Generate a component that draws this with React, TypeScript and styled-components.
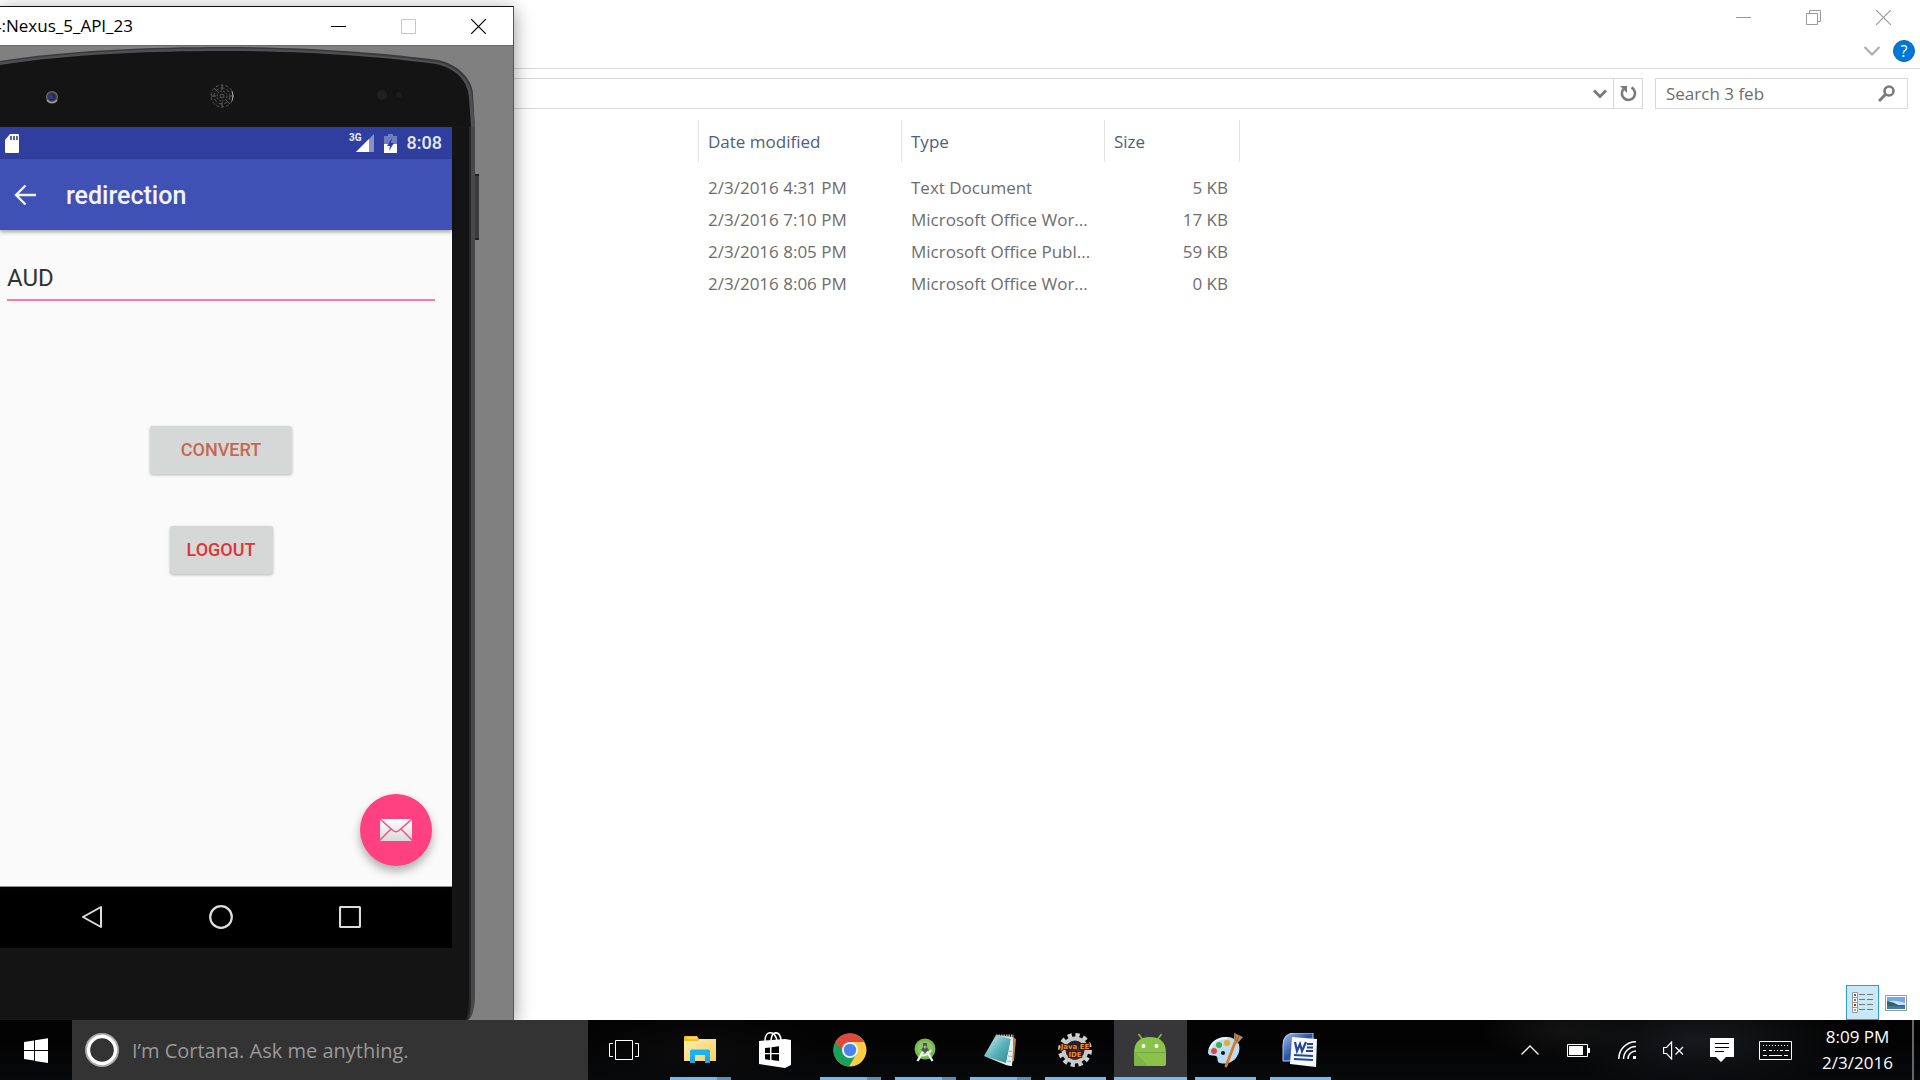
import React from 'react';
import styled, { createGlobalStyle } from 'styled-components';

const GlobalStyle = createGlobalStyle`
  *, *::before, *::after { box-sizing: border-box; }
  body { margin: 0; background: #fff; font-family: "Open Sans", "Noto Sans", sans-serif; font-size: 17px; line-height: 24px; }
  button { font: inherit; color: inherit; border: 0; padding: 0; background: none; display: flex; align-items: center; justify-content: center; flex-shrink: 0; }
  input { font: inherit; color: inherit; border: 0; padding: 0; background: none; outline: none; min-width: 0; }
  svg { display: block; flex-shrink: 0; }
`;

const Page = styled.div`
  display: flex;
  flex-direction: column;
  height: 100vh;
  overflow: hidden;
`;

const Desktop = styled.main`
  position: relative;
  flex: 1;
  min-height: 0;
  display: flex;
  overflow: hidden;
`;

/* ---------- File explorer ---------- */

const Explorer = styled.section`
  flex: 1;
  display: flex;
  flex-direction: column;
  background: #fff;
`;

const CaptionBar = styled.header`
  display: flex;
  justify-content: flex-end;
  height: 34px;
  padding-right: 2px;
`;

const CaptionButton = styled.button<{ $tone?: string; $h?: number }>`
  width: 70px;
  height: ${(p) => p.$h ?? 34}px;
  color: ${(p) => p.$tone ?? '#999'};
`;

const RibbonBar = styled.div`
  display: flex;
  align-items: center;
  justify-content: flex-end;
  gap: 12px;
  height: 35px;
  padding: 0 5px 0 0;
  border-bottom: 1px solid #dadada;
`;

const IconButton = styled.button<{ $w: number }>`
  width: ${(p) => p.$w}px;
  align-self: stretch;
  color: #7a7a7a;
`;

const AddressRow = styled.div`
  display: flex;
  gap: 12px;
  padding: 9px 12px 11px 0;
`;

const AddressBox = styled.div`
  flex: 1;
  display: flex;
  height: 31px;
  border: 1px solid #d9d9d9;
`;

const AddressInput = styled.input`
  flex: 1;
`;

const RefreshCell = styled.div`
  display: flex;
  border-left: 1px solid #d9d9d9;
`;

const SearchBox = styled.form`
  display: flex;
  align-items: center;
  width: 253px;
  height: 31px;
  padding: 0 6px 0 10px;
  border: 1px solid #d9d9d9;
`;

const SearchInput = styled.input`
  flex: 1;
  color: #6d6d6d;
  &::placeholder { color: #6d6d6d; opacity: 1; }
`;

const FileArea = styled.div`
  flex: 1;
  padding-left: 698px;
`;

const FileTable = styled.table`
  table-layout: fixed;
  width: 542px;
  border-collapse: separate;
  border-spacing: 0;
`;

const HeadCell = styled.th`
  height: 42px;
  padding: 2px 0 0 9px;
  border-left: 1px solid #e3e3e3;
  color: #4c607a;
  font-weight: 400;
  text-align: left;
  &:last-child { border-right: 1px solid #e3e3e3; }
`;

const SpacerCell = styled.td`
  height: 10px;
  padding: 0;
`;

const Cell = styled.td<{ $right?: boolean }>`
  height: 32px;
  padding: 0 ${(p) => (p.$right ? 12 : 0)}px 0 10px;
  color: #6d6d6d;
  text-align: ${(p) => (p.$right ? 'right' : 'left')};
  white-space: nowrap;
`;

const ViewBar = styled.footer`
  display: flex;
  align-items: center;
  justify-content: flex-end;
  gap: 6px;
  padding-right: 13px;
`;

const ViewButton = styled.button<{ $on?: boolean }>`
  width: ${(p) => (p.$on ? 33 : 22)}px;
  height: 35px;
  border: ${(p) => (p.$on ? '1px solid #26a0da' : '0')};
  background: ${(p) => (p.$on ? '#cbe8f6' : 'none')};
`;

/* ---------- Emulator window ---------- */

const EmulatorWindow = styled.section`
  position: absolute;
  left: 0;
  top: 6px;
  bottom: 0;
  width: 514px;
  display: flex;
  flex-direction: column;
  background: #808080;
  border-top: 1px solid #111;
  border-right: 1px solid #555;
  box-shadow: 0 4px 18px rgba(0, 0, 0, 0.42);
`;

const EmulatorCaption = styled.header`
  display: flex;
  justify-content: space-between;
  height: 39px;
  background: #fff;
  border-bottom: 1px solid #6a6a6a;
  color: #000;
`;

const EmulatorTitle = styled.h1`
  display: flex;
  align-items: center;
  justify-content: flex-end;
  width: 133px;
  margin: 0;
  font-size: 17px;
  font-weight: 400;
  overflow: hidden;
  white-space: nowrap;
`;

const CaptionGroup = styled.div`
  display: flex;
`;

const Phone = styled.div`
  position: relative;
  flex: 1;
  display: flex;
  flex-direction: column;
`;

const PhoneBody = styled.div`
  flex: 1;
  width: 475px;
  background: #141414;
  border-right: 4px solid #48484b;
  border-bottom-right-radius: 8px 24px;
  box-shadow: inset -2px 0 1px #29292b;
`;

const SideKey = styled.i`
  position: absolute;
  left: 475px;
  top: 128px;
  width: 4px;
  height: 66px;
  background: #3b3b3c;
  border-top: 2px solid #222;
  border-bottom: 2px solid #222;
`;

const Screen = styled.div`
  width: 452px;
  font-family: Roboto, sans-serif;
`;

const StatusBar = styled.div`
  display: flex;
  align-items: center;
  height: 32px;
  padding: 0 10px 0 5px;
  background: #303f9f;
  color: #e8eaf6;
  font-size: 18px;
  font-weight: 500;
`;

const StatusGroup = styled.div`
  display: flex;
  align-items: center;
  gap: 10px;
  margin-left: auto;
`;

const Network = styled.div`
  display: flex;
  align-items: flex-start;
  font-size: 10px;
  line-height: 8px;
  font-weight: 700;
`;

const NetworkLabel = styled.span`
  margin-right: -6px;
`;

const AppBar = styled.div`
  position: relative;
  display: flex;
  align-items: center;
  gap: 30px;
  height: 71px;
  padding-left: 14px;
  background: #3f51b5;
  box-shadow: 0 2px 4px rgba(0, 0, 0, 0.35);
  color: #f3f4fb;
`;

const AppTitle = styled.h2`
  margin: 0;
  padding-top: 2px;
  font-size: 25px;
  line-height: 32px;
  font-weight: 500;
`;

const AppContent = styled.div`
  display: flex;
  flex-direction: column;
  align-items: center;
  height: 657px;
  padding: 28px 17px 20px 7px;
  background: #fafafa;
  border-bottom: 1px solid #8b9490;
`;

const CurrencyInput = styled.input`
  align-self: stretch;
  height: 43px;
  padding-bottom: 2px;
  border-bottom: 2px solid #ff7ba6;
  color: #333;
  font-size: 24px;
`;

const AppButton = styled.button<{ $w: number; $top: number; $color: string }>`
  width: ${(p) => p.$w}px;
  height: 48px;
  margin-top: ${(p) => p.$top}px;
  border-radius: 3px;
  background: #d6d7d7;
  box-shadow: 0 1px 3px rgba(0, 0, 0, 0.28);
  color: ${(p) => p.$color};
  font-size: 18px;
  font-weight: 500;
`;

const Fab = styled.button`
  align-self: flex-end;
  width: 72px;
  height: 72px;
  margin-top: auto;
  margin-right: 3px;
  border-radius: 50%;
  background: #ff4081;
  box-shadow: 0 5px 10px rgba(0, 0, 0, 0.32);
`;

const NavBar = styled.nav`
  display: flex;
  align-items: center;
  justify-content: center;
  gap: 104px;
  height: 61px;
  padding: 0 10px 2px 0;
  background: #000;
`;

const NavButton = styled.button`
  width: 25px;
  height: 40px;
`;

/* ---------- Taskbar ---------- */

const Taskbar = styled.footer`
  display: flex;
  height: 60px;
  background:
    radial-gradient(ellipse 150px 50px at 1700px 20px, #17191c, transparent),
    radial-gradient(ellipse 80px 30px at 1560px 10px, #131313, transparent),
    radial-gradient(ellipse 120px 40px at 700px 30px, #0b0b0c, transparent),
    linear-gradient(#030303 0 20px, #08090b);
  color: #fff;
`;

const StartButton = styled.button`
  width: 72px;
`;

const CortanaBox = styled.label`
  display: flex;
  align-items: center;
  gap: 13px;
  width: 516px;
  padding-left: 13px;
  background: #333;
`;

const CortanaInput = styled.input`
  flex: 1;
  padding-top: 2px;
  color: #999;
  font-size: 20px;
  line-height: 28px;
  &::placeholder { color: #999; opacity: 1; }
`;

const Apps = styled.div`
  display: flex;
  gap: 2px;
`;

const AppTile = styled.button<{ $active?: boolean; $plain?: boolean }>`
  width: ${(p) => (p.$plain ? 74 : 73)}px;
  padding-right: 2px;
  background: ${(p) => (p.$active ? '#37373a' : 'none')};
  position: relative;
`;

const RunMark = styled.i<{ $wide?: boolean; $multi?: boolean }>`
  position: absolute;
  left: ${(p) => (p.$wide ? 0 : 6)}px;
  right: ${(p) => (p.$wide ? 0 : 6)}px;
  bottom: 0;
  height: 3px;
  background: #76b9ed;
  border-right: ${(p) => (p.$multi ? '14px solid #5b8fb8' : '0')};
`;

const Tray = styled.div`
  display: flex;
  align-items: center;
  margin-left: auto;
`;

const TrayButton = styled.button<{ $w: number }>`
  width: ${(p) => p.$w}px;
  height: 60px;
`;

const Clock = styled.time`
  width: 109px;
  text-align: center;
  line-height: 26px;
`;

const ShowDesktop = styled.button`
  width: 8px;
  height: 60px;
  border-left: 2px solid #666;
`;

/* ---------- Drawings ---------- */

const Minimize = () => (
  <svg width="15" height="15"><path d="M0 7.5h15" stroke="currentColor" /></svg>
);
const Close = () => (
  <svg width="15" height="15"><path d="M0 0l15 15M15 0L0 15" stroke="currentColor" fill="none" strokeWidth="1.2" /></svg>
);
const Restore = () => (
  <svg width="15" height="15"><path d="M.5 3.500h11v11H.5zM3.500 3.500v-3h11v11h-3" stroke="currentColor" fill="none" /></svg>
);
const Maximize = () => (
  <svg width="15" height="15"><path d="M.5.5h14v14H.5z" stroke="currentColor" fill="none" /></svg>
);

const PhoneTop = () => (
  <svg width="512" height="81" viewBox="0 0 512 81" aria-hidden="true">
    <defs>
      <radialGradient id="lens"><stop offset="0" stopColor="#3a3ab0" /><stop offset=".4" stopColor="#22224a" /><stop offset=".7" stopColor="#444" /><stop offset="1" stopColor="#777" /></radialGradient>
    </defs>
    <path d="M0 15C70 4 150 1 225 1C310 1 385 7 438 14C460 19 472 34 473 48L475 81H0z" fill="#3a3a3c" />
    <path d="M0 16.500C70 5.500 150 2.500 225 2.500C310 2.500 385 9 437 16C459 21 471 36 472 50L475 81H0z" fill="#505054" />
    <path d="M0 19C70 8 150 5 225 5C310 5 385 11 436 18C458 23 468 36 469 52L471 81H0z" fill="#141414" />
    <circle cx="52" cy="51" r="6" fill="url(#lens)" />
    <path d="M47 54a6 6 0 0 0 10 0" stroke="#999" strokeWidth="1.500" fill="none" />
    <circle cx="51" cy="51" r="2" fill="#3434a8" />
    <g stroke="#5e5e5e" strokeWidth="1" fill="none">
      <circle cx="222" cy="50" r="11" strokeDasharray="3 2" />
      <circle cx="222" cy="50" r="8" strokeDasharray="4 2" />
      <circle cx="222" cy="50" r="5" strokeDasharray="2 1" />
      <circle cx="222" cy="50" r="2" />
      <path d="M222 39v5M222 56v5M211 50h5M230 50h4M214 42l4 4M226 54l4 4" />
      <path d="M232 45q2 5 0 10" stroke="#aaa" />
    </g>
    <circle cx="382" cy="49" r="5" fill="#202020" />
    <circle cx="399" cy="49" r="3" fill="#241a1c" />
  </svg>
);

const SdCard = () => (
  <svg width="15" height="19" viewBox="0 0 15 19"><path d="M5 0h8q1 0 1 1v17q0 1-1 1H1q-1 0-1-1V6z" fill="#fff" /><path d="M6 2v4M9 2v4M12 2v4" stroke="#303f9f" strokeWidth="1.600" /></svg>
);
const Signal = () => (
  <svg width="18" height="18" viewBox="0 0 18 18"><path d="M18 0v18H0z" fill="#8790c9" /><path d="M13 5v13H0z" fill="#fff" /></svg>
);
const PhoneBattery = () => (
  <svg width="13" height="19" viewBox="0 0 13 19"><path d="M4 0h5v2h4v17H0V2h4z" fill="#6f7abf" /><path d="M0 10h13v9H0z" fill="#fff" /><path d="M8 4l-5 8h3l-1 5 5-8H7z" fill="#303f9f" /></svg>
);
const BackArrow = () => (
  <svg width="22" height="22" viewBox="0 0 22 22"><path d="M22 11H2M11.500 1.500L2 11l9.500 9.500" fill="none" stroke="#eef0fa" strokeWidth="2.400" /></svg>
);
const Mail = () => (
  <svg width="32" height="22" viewBox="0 0 32 22">
    <defs><linearGradient id="mail" x2="0" y2="1"><stop stopColor="#fff" /><stop offset="1" stopColor="#d9d9d9" /></linearGradient></defs>
    <rect width="32" height="22" rx="1.500" fill="url(#mail)" />
    <path d="M0 0l13 11.500q3 2.500 6 0L32 0M0 21l11-11M32 21L21 10" fill="none" stroke="#f0508a" strokeWidth="1.500" />
  </svg>
);

const WindowsLogo = () => (
  <svg width="24" height="25" viewBox="0 0 24 25" fill="#fff"><path d="M0 4l10-1.500V12H0zM11 2.300L24 .3V12H11zM0 13h10v9.500L0 21zM11 13h13v12l-13-2z" /></svg>
);
const CortanaRing = () => (
  <svg width="34" height="34" viewBox="0 0 34 34" fill="none"><circle cx="17" cy="17" r="16" stroke="#aaa" strokeWidth="2" /><circle cx="17" cy="17" r="13.500" stroke="#fff" strokeWidth="3.400" /></svg>
);
const TaskView = () => (
  <svg width="30" height="20" viewBox="0 0 30 20" fill="none" stroke="#fff"><path d="M6.500.5h17v19h-17zM4 3.500H.5v13H4M26 3.500h3.500v13H26" /></svg>
);
const Folder = () => (
  <svg width="32" height="28" viewBox="0 0 32 28">
    <defs><linearGradient id="fold" x2="1" y2="1"><stop stopColor="#ffedae" /><stop offset="1" stopColor="#f6cf66" /></linearGradient></defs>
    <path d="M0 1q0-1 1-1h12l2 3h16v8H0z" fill="#f5bd24" /><path d="M3 2h10" stroke="#fff2b8" /><path d="M0 5h14l2-2h16v22H0z" fill="url(#fold)" />
    <path d="M6 26V15q0-1.500 1.500-1.500h17Q26 13.500 26 15v11h-5v-7H11v7z" fill="#18b4f4" /><path d="M6 21h5v6H6zM21 21h5v6h-5z" fill="#2a9fe4" />
  </svg>
);
const Store = () => (
  <svg width="32" height="36" viewBox="0 0 32 36">
    <path d="M6 9c0-11 10-11 12 0M12 8C13-2 21-1 22 8" stroke="#fff" strokeWidth="1.600" fill="none" />
    <path d="M0 9l26-2 6 1v25l-6 3-26-4z" fill="#fff" />
    <path d="M6 16l5-.6V21H6zM12.500 15.200L20 14.300V21h-7.500zM6 22.300h5v5.600l-5-.6zM12.500 22.300H20v6.700l-7.500-1z" fill="#000" />
  </svg>
);
const ChromeIcon = () => (
  <svg width="34" height="34" viewBox="0 0 34 34">
    <circle cx="17" cy="17" r="16.500" fill="#fccd45" />
    <path d="M17 17L2.700 8.700A16.500 16.500 0 0 0 16 33.500L23.500 21z" fill="#18a05d" />
    <path d="M17 9h14.500A16.500 16.500 0 0 0 2.700 8.700L10 19z" fill="#dc4a3d" />
    <circle cx="17" cy="17" r="8" fill="#f2f2f2" /><circle cx="17" cy="17" r="6.200" fill="#4a85ee" />
  </svg>
);
const StudioIcon = () => (
  <svg width="22" height="24" viewBox="0 0 22 24">
    <circle cx="11" cy="11" r="10.500" fill="#78b650" /><circle cx="11" cy="11" r="8" fill="#8cc461" />
    <path d="M10 12L3.500 23M12 12l6.500 11" stroke="#f0f0f0" strokeWidth="2.400" /><path d="M6 17q7 2 11-5" stroke="#eee" strokeWidth="2" fill="none" />
    <path d="M9 5h4v4l2 3-4 3-4-3 2-3z" fill="#4b5557" /><circle cx="11" cy="9" r="1.500" fill="#8cc461" />
  </svg>
);
const NotepadIcon = () => (
  <svg width="34" height="34" viewBox="0 0 34 34">
    <defs><linearGradient id="note" x2="1" y2="1"><stop stopColor="#d9f4f3" /><stop offset=".55" stopColor="#56afb7" /><stop offset="1" stopColor="#31858f" /></linearGradient></defs>
    <path d="M30 4l3 2-2 22-4 2z" fill="#b78635" /><path d="M13 2l17 2-1 29-6-1z" fill="#e9f0f2" /><path d="M13 2l15 4-5 25L1 23z" fill="url(#note)" />
    <path d="M1 23l22 7 5-24 2 2-1 25-6-1z" fill="#e6eff1" /><path d="M25 18l4 .5M25 23l4 .5M24 28l4 .5" stroke="#9fb0b5" /><path d="M13 3h18" stroke="#bbb" strokeWidth="3" strokeDasharray="1.500 1" />
  </svg>
);
const GearText = styled.text`
  font: 700 7px "DejaVu Sans", sans-serif;
  fill: #f68b1f;
  stroke: #2a160a;
  stroke-width: 2px;
  paint-order: stroke;
  text-anchor: middle;
`;
const EclipseIcon = () => (
  <svg width="34" height="34" viewBox="0 0 34 34" overflow="visible">
    <circle cx="17" cy="17" r="14.500" fill="none" stroke="#d0d0d0" strokeWidth="5" strokeDasharray="4.100 3.490" />
    <circle cx="17" cy="17" r="11.500" fill="#24203a" stroke="#c8c8c8" strokeWidth="4" /><circle cx="17" cy="20" r="7" fill="#3b2d5c" />
    <GearText x="17" y="16">Java EE</GearText><GearText x="17" y="24">IDE</GearText>
  </svg>
);
const AndroidIcon = () => (
  <svg width="32" height="34" viewBox="0 0 32 34">
    <path d="M9 7L4.500 1M23 7l4.500-6" stroke="#7fb53c" strokeWidth="1.800" /><path d="M0 20C0 9 6 4 16 4s16 5 16 16v11q0 2-2 2H2q-2 0-2-2z" fill="#8bc34a" />
    <path d="M2 20l12 13H2q-2 0-2-2V20z" fill="#7fb544" /><path d="M0 19.500h32" stroke="#76a63f" /><circle cx="9.500" cy="13" r="2" fill="#fff" /><circle cx="22.500" cy="13" r="2" fill="#fff" />
  </svg>
);
const PaintIcon = () => (
  <svg width="36" height="36" viewBox="0 0 36 36">
    <path d="M1 20C2 9 12 4 21 5c9 1 13 7 11 15-3 10-12 13-19 11-4-1-1-5-4-7-3-1-8 1-8-4z" fill="#b9def4" /><path d="M3 17C6 9 13 6 20 6" stroke="#e8f6ff" strokeWidth="2" fill="none" />
    <circle cx="16" cy="21" r="2" fill="#111" /><circle cx="7" cy="19" r="3" fill="#e04a3a" /><circle cx="12" cy="13" r="3" fill="#3fae49" /><circle cx="20" cy="11" r="3" fill="#f2a81d" />
    <path d="M29 8L19 34" stroke="#d9782a" strokeWidth="2.800" strokeLinecap="round" /><path d="M27 1l9 4-6 7-3-2z" fill="#b98b5d" /><path d="M28 1l1 8M32 3l-2 7" stroke="#8c6238" />
  </svg>
);
const WordIcon = () => (
  <svg width="36" height="34" viewBox="0 0 36 34">
    <defs><linearGradient id="word" x2="1" y2="1"><stop stopColor="#a7c0ee" /><stop offset=".5" stopColor="#2b51a5" /><stop offset="1" stopColor="#5b80cb" /></linearGradient></defs>
    <path d="M1 12Q1 0 13 0h18v28H1z" fill="url(#word)" stroke="#b9cdf3" /><path d="M10 4l25 2-1 28-26-3z" fill="#f7f9fd" />
    <path d="M13 9l2 9 3-7 2 7 4-9" stroke="#24479a" strokeWidth="2.200" fill="none" /><path d="M25 11h6M25 14.500h6M24 18h7M12 22l19 1M12 26l19 1" stroke="#24479a" strokeWidth="1.800" />
  </svg>
);

const files = [
  { date: '2/3/2016 4:31 PM', type: 'Text Document', size: '5 KB' },
  { date: '2/3/2016 7:10 PM', type: 'Microsoft Office Wor...', size: '17 KB' },
  { date: '2/3/2016 8:05 PM', type: 'Microsoft Office Publ...', size: '59 KB' },
  { date: '2/3/2016 8:06 PM', type: 'Microsoft Office Wor...', size: '0 KB' },
];

const apps = [
  { name: 'File Explorer', icon: <Folder />, running: true, multi: true },
  { name: 'Store', icon: <Store /> },
  { name: 'Chrome', icon: <ChromeIcon />, running: true, multi: true },
  { name: 'Android Studio', icon: <StudioIcon />, running: true, multi: true },
  { name: 'Notepad', icon: <NotepadIcon />, running: true, multi: true },
  { name: 'Eclipse', icon: <EclipseIcon />, running: true },
  { name: 'Emulator', icon: <AndroidIcon />, running: true, active: true },
  { name: 'Paint', icon: <PaintIcon />, running: true },
  { name: 'Word', icon: <WordIcon />, running: true },
];

const HelpMark = styled.text`
  font: 400 16px "Open Sans", sans-serif;
  fill: #fff;
  text-anchor: middle;
`;

function ExplorerWindow() {
  return (
    <Explorer>
      <CaptionBar>
        <CaptionButton aria-label="Minimize"><Minimize /></CaptionButton>
        <CaptionButton aria-label="Restore"><Restore /></CaptionButton>
        <CaptionButton aria-label="Close"><Close /></CaptionButton>
      </CaptionBar>
      <RibbonBar>
        <IconButton $w={18} aria-label="Expand ribbon">
          <svg width="18" height="10"><path d="M1.500 1L9 8.500 16.500 1" fill="none" stroke="#aaa" strokeWidth="2" /></svg>
        </IconButton>
        <IconButton $w={22} aria-label="Help">
          <svg width="22" height="22"><circle cx="11" cy="11" r="10.500" fill="#0078d7" stroke="#0c65b0" /><HelpMark x="11" y="17">?</HelpMark></svg>
        </IconButton>
      </RibbonBar>
      <AddressRow>
        <AddressBox>
          <AddressInput aria-label="Address" />
          <IconButton $w={26} aria-label="Previous locations">
            <svg width="14" height="10"><path d="M1 1.500l6 6 6-6" fill="none" stroke="currentColor" strokeWidth="3" /></svg>
          </IconButton>
          <RefreshCell>
            <IconButton $w={28} aria-label="Refresh">
              <svg width="17" height="17" viewBox="0 0 17 17"><path d="M11.500 2.500A6.600 6.600 0 1 1 3.500 4" fill="none" stroke="currentColor" strokeWidth="2.600" /><path d="M0 1h7v7z" fill="currentColor" /></svg>
            </IconButton>
          </RefreshCell>
        </AddressBox>
        <SearchBox>
          <SearchInput aria-label="Search 3 feb" placeholder="Search 3 feb" />
          <IconButton $w={30} type="button" aria-label="Search">
            <svg width="17" height="17" viewBox="0 0 17 17" fill="none" stroke="currentColor"><circle cx="11" cy="6" r="4.500" strokeWidth="2.600" /><path d="M7.500 9.500L1 16" strokeWidth="3" /></svg>
          </IconButton>
        </SearchBox>
      </AddressRow>
      <FileArea>
        <FileTable>
          <colgroup><col width="203" /><col width="203" /><col width="136" /></colgroup>
          <thead>
            <tr><HeadCell>Date modified</HeadCell><HeadCell>Type</HeadCell><HeadCell>Size</HeadCell></tr>
          </thead>
          <tbody>
            <tr><SpacerCell colSpan={3} /></tr>
            {files.map((f) => (
              <tr key={f.date}><Cell>{f.date}</Cell><Cell>{f.type}</Cell><Cell $right>{f.size}</Cell></tr>
            ))}
          </tbody>
        </FileTable>
      </FileArea>
      <ViewBar>
        <ViewButton $on aria-label="Details view">
          <svg width="21" height="21" viewBox="0 0 21 21" fill="none">
            <path d="M.5.5h5v20h-5zM.5 5.500h5M.5 10.500h5M.5 15.500h5" stroke="#999" fill="#fff" />
            <path d="M7 2.500h6M15 2.500h6M7 7.500h6M15 7.500h6M7 12.500h6M15 12.500h6M7 17.500h6M15 17.500h6" stroke="#777" />
            <path d="M2 3h2" stroke="#36a" strokeWidth="2" /><path d="M2 8h2" stroke="#783" strokeWidth="2" /><path d="M2 13h2" stroke="#b22" strokeWidth="2" /><path d="M2 18h2" stroke="#8aa" strokeWidth="2" />
          </svg>
        </ViewButton>
        <ViewButton aria-label="Large thumbnails">
          <svg width="22" height="16" viewBox="0 0 22 16">
            <path d="M.5.5h21v15H.5z" fill="#fff" stroke="#999" /><path d="M2 2h18v12H2z" fill="#6fa8ee" /><path d="M2 7q6-3 18 1v2H2z" fill="#cfe3f6" /><path d="M2 6q7 1 11 4h7v1H2z" fill="#2f6b48" /><path d="M2 11h18v3H2z" fill="#3f78ad" />
          </svg>
        </ViewButton>
      </ViewBar>
    </Explorer>
  );
}

function Emulator() {
  return (
    <EmulatorWindow>
      <EmulatorCaption>
        <EmulatorTitle>4:Nexus_5_API_23</EmulatorTitle>
        <CaptionGroup>
          <CaptionButton $h={38} $tone="#000" aria-label="Minimize emulator"><Minimize /></CaptionButton>
          <CaptionButton $h={38} $tone="#c6c6c6" aria-label="Maximize emulator" disabled><Maximize /></CaptionButton>
          <CaptionButton $h={38} $tone="#000" aria-label="Close emulator"><Close /></CaptionButton>
        </CaptionGroup>
      </EmulatorCaption>
      <Phone>
        <PhoneTop />
        <SideKey />
        <PhoneBody>
          <Screen>
            <StatusBar>
              <SdCard />
              <StatusGroup>
                <Network><NetworkLabel>3G</NetworkLabel><Signal /></Network>
                <PhoneBattery />
                <span>8:08</span>
              </StatusGroup>
            </StatusBar>
            <AppBar>
              <button aria-label="Navigate up"><BackArrow /></button>
              <AppTitle>redirection</AppTitle>
            </AppBar>
            <AppContent>
              <CurrencyInput aria-label="Currency" defaultValue="AUD" />
              <AppButton $w={142} $top={125} $color="#c4694f">CONVERT</AppButton>
              <AppButton $w={103} $top={52} $color="#dc3438">LOGOUT</AppButton>
              <Fab aria-label="Send mail"><Mail /></Fab>
            </AppContent>
            <NavBar>
              <NavButton aria-label="Back"><svg width="22" height="24"><path d="M20 2v20L2 12z" fill="none" stroke="#ddd" strokeWidth="2" strokeLinejoin="round" /></svg></NavButton>
              <NavButton aria-label="Home"><svg width="24" height="24"><circle cx="12" cy="12" r="10.800" fill="none" stroke="#ddd" strokeWidth="2.200" /></svg></NavButton>
              <NavButton aria-label="Overview"><svg width="22" height="22"><rect x="1" y="1" width="20" height="20" rx="1" fill="none" stroke="#ddd" strokeWidth="2.200" /></svg></NavButton>
            </NavBar>
          </Screen>
        </PhoneBody>
      </Phone>
    </EmulatorWindow>
  );
}

function SystemTray() {
  return (
    <Tray>
      <TrayButton $w={46} aria-label="Show hidden icons"><svg width="18" height="10"><path d="M.5 9.500L9 1l8.500 8.500" stroke="#fff" strokeWidth="1.300" fill="none" /></svg></TrayButton>
      <TrayButton $w={50} aria-label="Battery"><svg width="23" height="13"><path d="M.5.5h20v12H.5z" fill="none" stroke="#fff" /><path d="M2 2h14v9H2zM21 4h2v5h-2z" fill="#fff" /></svg></TrayButton>
      <TrayButton $w={47} aria-label="Network"><svg width="18" height="18" fill="none" stroke="#fff" strokeWidth="1.500"><path d="M.8 18A17 17 0 0 1 18 .8M5.500 18A12.500 12.500 0 0 1 18 5.500M10 18a8 8 0 0 1 8-8" /><path d="M15 15h3v3h-3z" fill="#fff" stroke="none" /></svg></TrayButton>
      <TrayButton $w={46} aria-label="Volume muted"><svg width="21" height="19" fill="none" stroke="#fff" strokeWidth="1.200"><path d="M.6 6.500h3l5-5.500v17l-5-5.500h-3zM12.500 6l7.500 7.500M20 6l-7.500 7.500" /></svg></TrayButton>
      <TrayButton $w={51} aria-label="Notifications"><svg width="24" height="24"><path d="M0 0h24v19h-8l-5 5-5-5H0z" fill="#fff" /><path d="M5 5.500h14M5 9.500h14M5 13.500h9" stroke="#000" strokeWidth="1.200" /></svg></TrayButton>
      <TrayButton $w={56} aria-label="Touch keyboard"><svg width="33" height="19" fill="none" stroke="#fff"><path d="M.5.5h32v18H.5z" /><path d="M4 4.500h26" strokeDasharray="1 2" /><path d="M4 9.500h4M10 9.500h15" strokeDasharray="3 2 1 2 1 2" /><path d="M26 9.500h4M4 14.500h4M10 14.500h13M25 14.500h4" /></svg></TrayButton>
      <Clock><div>8:09 PM</div><div>2/3/2016</div></Clock>
      <ShowDesktop aria-label="Show desktop" />
    </Tray>
  );
}

export default function App() {
  return (
    <Page>
      <GlobalStyle />
      <Desktop>
        <ExplorerWindow />
        <Emulator />
      </Desktop>
      <Taskbar>
        <StartButton aria-label="Start"><WindowsLogo /></StartButton>
        <CortanaBox>
          <CortanaRing />
          <CortanaInput aria-label="Search" placeholder="I’m Cortana. Ask me anything." />
        </CortanaBox>
        <Apps>
          <AppTile $plain aria-label="Task view"><TaskView /></AppTile>
          {apps.map((a) => (
            <AppTile key={a.name} $active={a.active} aria-label={a.name}>
              {a.icon}
              {a.running && <RunMark $wide={a.active} $multi={a.multi} />}
            </AppTile>
          ))}
        </Apps>
        <SystemTray />
      </Taskbar>
    </Page>
  );
}
